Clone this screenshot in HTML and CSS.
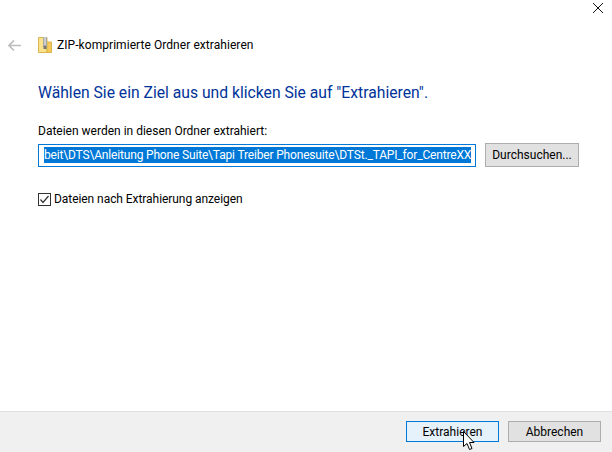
FILE: index.html
```html
<!DOCTYPE html>
<html lang="de">
<head>
<meta charset="utf-8">
<title>ZIP-komprimierte Ordner extrahieren</title>
<link rel="stylesheet" href="styles.css">
</head>
<body>
<div class="dialog">
  <div class="closebar">
    <svg class="close" width="10" height="10" viewBox="0 0 10 10"><path d="M0 0L10 10M10 0L0 10" stroke="#111" stroke-width="1" fill="none"/></svg>
  </div>
  <div class="titlebar">
    <svg class="back" width="13" height="11" viewBox="0 0 13 11"><path d="M6 .5L1 5.500L6 10.500M1 5.500H13" stroke="#bdbdbd" stroke-width="1.600" fill="none"/></svg>
    <svg class="zipicon" width="14" height="16" viewBox="0 0 14 16">
      <path d="M.5.5H9V15.500H.5Z" fill="#fbe38e" stroke="#d9b44f"/>
      <path d="M9 5H13.500V15.500H9Z" fill="#f4c95a" stroke="#d9b44f"/>
      <rect x="5" y="0" width="4" height="10" fill="#a9a9a9"/>
      <path d="M6 1H8M6 3H8M6 5H8M6 7H8" stroke="#eee" stroke-width="1"/>
      <rect x="5.500" y="9" width="3" height="3" fill="#777"/>
    </svg>
    <span class="title">ZIP-komprimierte Ordner extrahieren</span>
  </div>
  <main class="content">
    <h1 class="heading">Wählen Sie ein Ziel aus und klicken Sie auf "Extrahieren".</h1>
    <div class="label">Dateien werden in diesen Ordner extrahiert:</div>
    <div class="pathrow">
      <div class="pathbox"><span class="selected">beit\DTS\Anleitung Phone Suite\Tapi Treiber Phonesuite\DTSt._TAPI_for_CentreXX</span></div>
      <div class="btn browse">Durchsuchen...</div>
    </div>
    <label class="check">
      <svg class="box" width="13" height="13" viewBox="0 0 13 13"><rect x=".5" y=".5" width="12" height="12" fill="#fff" stroke="#333"/><path d="M2.500 6.500L5 9.500L10.500 3" stroke="#333" stroke-width="1.200" fill="none"/></svg>
      <span class="checktext">Dateien nach Extrahierung anzeigen</span>
    </label>
  </main>
  <footer class="footer">
    <div class="btn primary">Extrahieren</div>
    <div class="btn">Abbrechen</div>
  </footer>
  <svg class="cursor" width="14" height="20" viewBox="0 0 14 20"><path d="M.5.5V15.500L4 12.500L6.500 18.500L9 17.500L6.500 11.500H11Z" fill="#fff" stroke="#000" stroke-width="1"/></svg>
</div>
</body>
</html>
```
FILE: styles.css
```css
* { box-sizing: border-box; }
html, body { margin: 0; padding: 0; background: #fff; }
body { font-family: Roboto, "Open Sans", sans-serif; font-size: 12px; color: #000; }
.dialog { position: relative; width: 612px; height: 452px; display: flex; flex-direction: column; overflow: hidden; }
.closebar { height: 31px; display: flex; justify-content: flex-end; padding: 2px 9px 0 0; align-items: flex-start; }
.close { margin-top: 1px; }
.titlebar { height: 28px; display: flex; align-items: center; padding-left: 8px; }
.back { margin-right: 17px; }
.zipicon { margin-right: 5px; }
.title { font-size: 12px; line-height: 16px; letter-spacing: .06px; }
.content { flex: 1; padding: 24px 33px 0 38px; }
.heading { margin: 0; font-size: 15.7px; font-weight: 400; line-height: 20px; color: #003399; white-space: nowrap; }
.label { margin-top: 20px; line-height: 16px; }
.pathrow { margin-top: 4px; display: flex; gap: 9px; }
.pathbox { width: 438px; height: 23px; margin-top: 1px; border: 1px solid #0078d7; padding: 2px 3px 3px 5px; display: flex; white-space: nowrap; }
.selected { flex: none; background: #0078d7; color: #fff; line-height: 16px; height: 16px; letter-spacing: -.17px; }
.btn { width: 93px; height: 24px; border: 1px solid #adadad; background: #e1e1e1; display: flex; align-items: center; justify-content: center; line-height: 16px; }
.browse { width: 94px; }
.check { margin-top: 24px; display: flex; align-items: center; gap: 3px; line-height: 16px; }
.checktext { letter-spacing: -.06px; }
.footer { height: 41px; background: #f0f0f0; border-top: 1px solid #dfdfdf; display: flex; justify-content: flex-end; align-items: flex-start; gap: 9px; padding: 9px 11px 0 0; }
.footer .btn { height: 21px; }
.primary { border-color: #0078d7; background: #e5f1fb; }
.cursor { position: absolute; left: 463px; top: 431px; }
```
